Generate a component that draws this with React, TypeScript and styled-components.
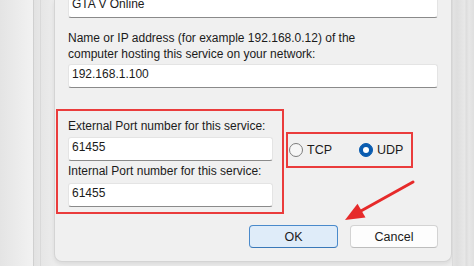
import React from "react";
import styled, { createGlobalStyle } from "styled-components";

const GlobalStyle = createGlobalStyle`
  html, body {
    margin: 0;
    padding: 0;
    background: #ececec;
  }
  body {
    font-family: "Liberation Sans", Arial, sans-serif;
    font-size: 12px;
    color: #1b1b1b;
  }
`;

type FieldProps = { $width?: number };
type CircleProps = { $checked?: boolean };
type ButtonProps = { $primary?: boolean; $width: number };

function App() {
  return (
    <>
      <GlobalStyle />
      <Screen>
        <Backdrop />
        <FrameBand />
        <Dialog>
          <Field style={{ marginTop: -6 }}>GTA V Online</Field>
          <Label $top={12}>
            Name or IP address (for example 192.168.0.12) of the
            <br />
            computer hosting this service on your network:
          </Label>
          <Field style={{ marginTop: 2 }}>192.168.1.100</Field>

          <PortsRow>
            <HighlightBox>
              <Label>External Port number for this service:</Label>
              <Field $width={205} style={{ marginTop: 3 }}>
                61455
              </Field>
              <Label $top={2}>Internal Port number for this service:</Label>
              <Field $width={205} style={{ marginTop: 4 }}>
                61455
              </Field>
            </HighlightBox>
            <ProtocolBox>
              <RadioOption>
                <Circle />
                TCP
              </RadioOption>
              <RadioOption>
                <Circle $checked />
                UDP
              </RadioOption>
            </ProtocolBox>
          </PortsRow>

          <ButtonRow>
            <DialogButton $primary $width={89}>
              OK
            </DialogButton>
            <DialogButton $width={88}>Cancel</DialogButton>
          </ButtonRow>
        </Dialog>
        <RightFrame />

        <Annotation width="474" height="266" viewBox="0 0 474 266">
          <line x1="413" y1="182" x2="360" y2="211.5" stroke="#e62a2a" strokeWidth="3" strokeLinecap="round" />
          <polygon points="345,220 365.5,217.5 357.5,203.7" fill="#e62a2a" />
        </Annotation>
      </Screen>
    </>
  );
}

export default App;

const Screen = styled.div`
  position: relative;
  display: flex;
  width: 474px;
  height: 266px;
  overflow: hidden;
  background: #ececec;
`;

const Backdrop = styled.div`
  width: 33px;
  height: 100%;
  background: linear-gradient(90deg, #e4e4e4 0%, #f2f2f2 100%);
  border-right: 1px solid #d0d0d0;
`;

const FrameBand = styled.div`
  width: 20px;
  height: 100%;
  background: linear-gradient(
    90deg,
    #e2e2e2 0px,
    #e6e6e6 6px,
    #d9d9d9 6px,
    #d9d9d9 7px,
    #e6e6e6 7px,
    #ececec 20px
  );
`;

const Dialog = styled.div`
  box-sizing: border-box;
  width: 398px;
  height: 262px;
  flex-shrink: 0;
  display: flex;
  flex-direction: column;
  padding: 0 13px 14px;
  background: #f0f0f0;
  border: 1px solid #d4d4d4;
  border-top: none;
  border-radius: 0 0 8px 8px;
  box-shadow: 0 2px 4px rgba(0, 0, 0, 0.08);
  overflow: hidden;
`;

const RightFrame = styled.div`
  flex: 1;
  height: 100%;
  background: linear-gradient(
    90deg,
    #d2d2d2 0px,
    #e3e3e3 1px,
    #dedede 5px,
    #e8e8e8 13px,
    #dcdcdc 14px,
    #e7e7e7 17px,
    #dfdfdf 22px
  );
`;

const Label = styled.div<{ $top?: number }>`
  margin-top: ${(p) => p.$top ?? 0}px;
  line-height: 16px;
  white-space: nowrap;
`;

const Field = styled.div<FieldProps>`
  box-sizing: border-box;
  width: ${(p) => (p.$width ? `${p.$width}px` : "100%")};
  height: 24px;
  flex-shrink: 0;
  padding: 0 3px;
  line-height: 18px;
  background: #ffffff;
  border: 1px solid #e4e4e4;
  border-bottom: 1px solid #8a8a8a;
  border-radius: 3px;
`;

const PortsRow = styled.div`
  display: flex;
  align-items: flex-start;
  margin-top: 21px;
  margin-left: -12px;
`;

const HighlightBox = styled.div`
  box-sizing: border-box;
  width: 228px;
  display: flex;
  flex-direction: column;
  padding: 7px 9px 5px 10px;
  border: 2px solid #ea3c3c;
`;

const ProtocolBox = styled.div`
  box-sizing: border-box;
  width: 127px;
  height: 36px;
  margin: 23px 0 0 2px;
  padding-left: 1px;
  display: flex;
  align-items: center;
  gap: 27px;
  border: 2px solid #ea3c3c;
`;

const RadioOption = styled.div`
  display: flex;
  align-items: center;
  gap: 4px;
  font-size: 12.5px;
`;

const Circle = styled.span<CircleProps>`
  box-sizing: border-box;
  width: 14px;
  height: 14px;
  border-radius: 50%;
  display: flex;
  align-items: center;
  justify-content: center;
  border: 1px solid ${(p) => (p.$checked ? "#0a5cb0" : "#7c7c7c")};
  background: ${(p) => (p.$checked ? "#0a5cb0" : "#f6f6f6")};

  &::after {
    content: "";
    display: ${(p) => (p.$checked ? "block" : "none")};
    width: 6px;
    height: 6px;
    border-radius: 50%;
    background: #ffffff;
  }
`;

const ButtonRow = styled.div`
  display: flex;
  justify-content: flex-end;
  gap: 12px;
  margin-top: 11px;
`;

const DialogButton = styled.div<ButtonProps>`
  box-sizing: border-box;
  width: ${(p) => p.$width}px;
  height: 23px;
  display: flex;
  align-items: center;
  justify-content: center;
  border-radius: 4px;
  background: ${(p) => (p.$primary ? "#dfecf9" : "#fdfdfd")};
  border: 1px solid ${(p) => (p.$primary ? "#4a8acb" : "#d3d3d3")};
  border-bottom-color: ${(p) => (p.$primary ? "#3a78b8" : "#bdbdbd")};
  font-size: 12.5px;
`;

const Annotation = styled.svg`
  position: absolute;
  left: 0;
  top: 0;
  pointer-events: none;
`;
